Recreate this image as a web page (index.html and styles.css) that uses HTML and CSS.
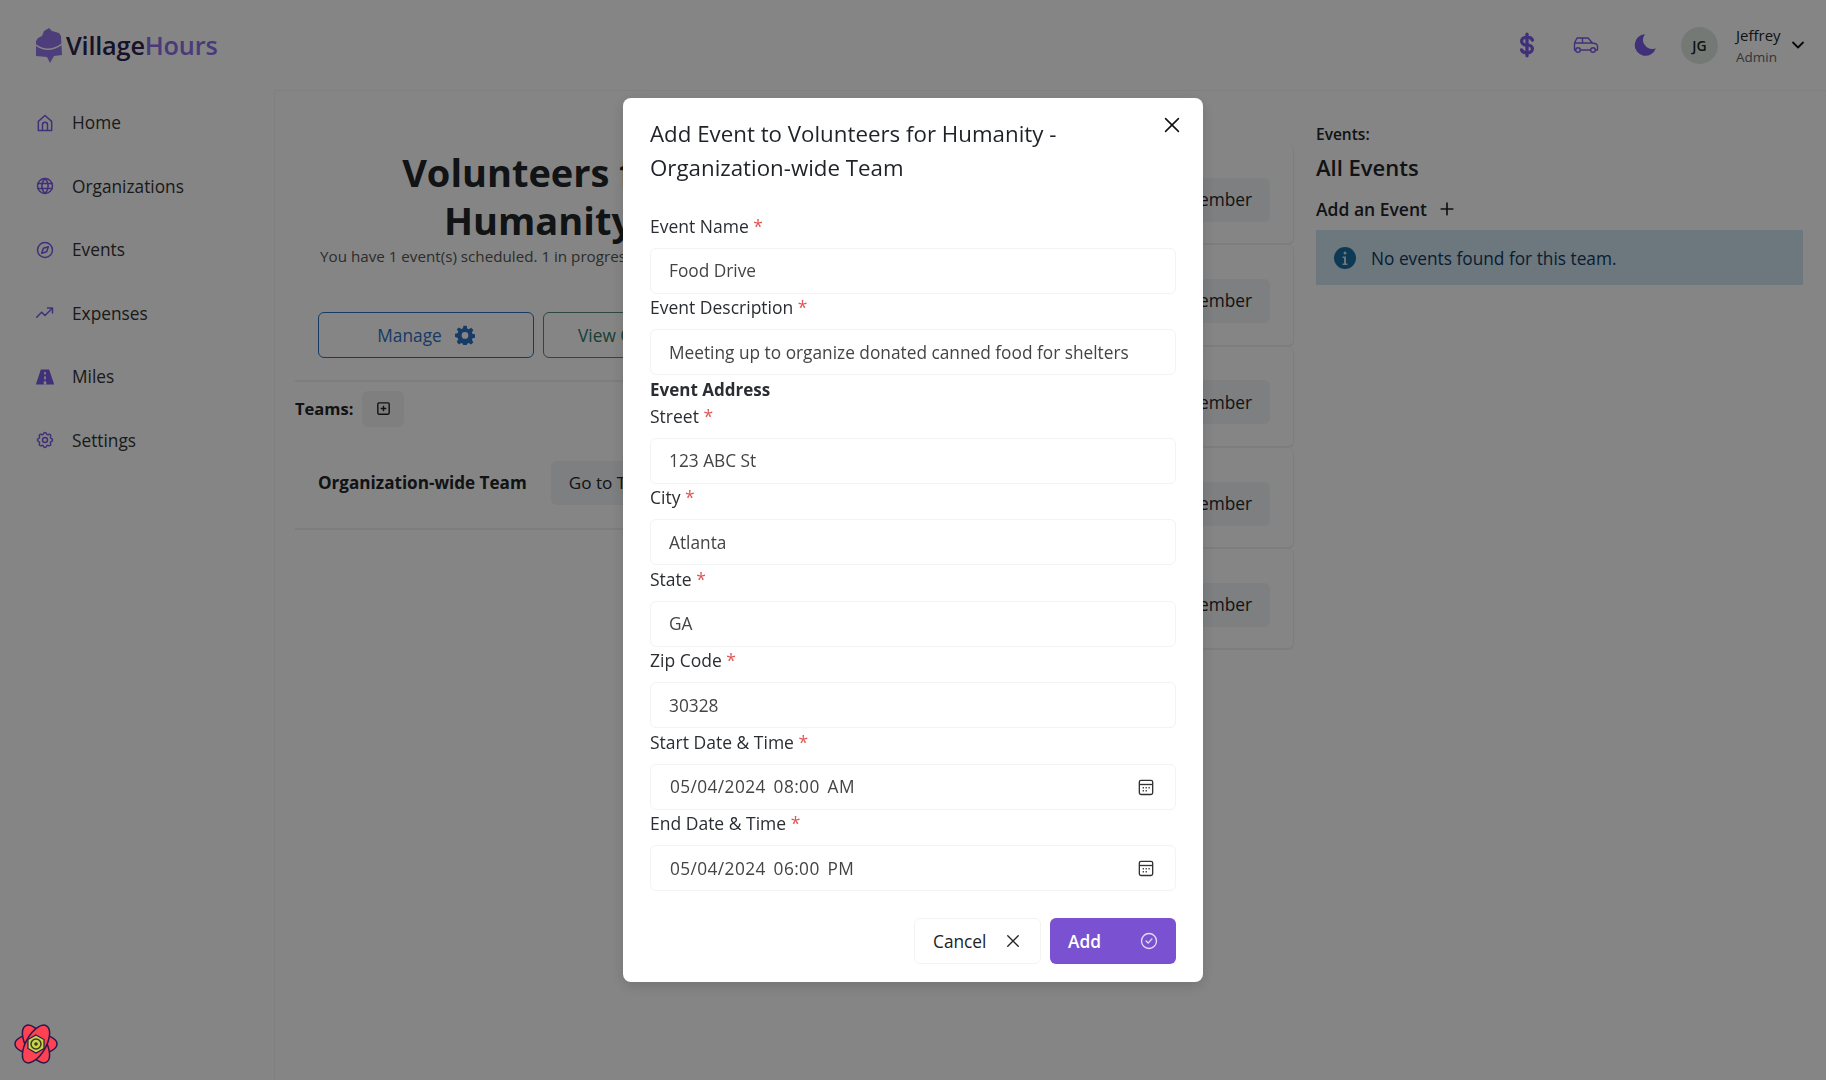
FILE: index.html
```html
<!DOCTYPE html>
<html lang="en">
<head>
    <meta charset="UTF-8">
    <meta name="viewport" content="width=device-width, initial-scale=1.0">
    <title>VillageHours</title>
    <link rel="stylesheet" href="styles.css">
</head>
<body>
    <header class="topbar">
        <div class="logo">
            <svg class="logo-mark" viewBox="0 0 26 35"><path d="M0 13 L2 10 L6 8 L8 3 L13 0 L16 3 L23 5 L25 8 L26 27 L18 28 L14 35 L11 29 L0 28Z" fill="#9478ec"/><path d="M0 17 Q12 26 26 16" fill="none" stroke="#fff" stroke-width="1.500"/></svg>
            <span class="logo-dark">Village</span><span class="logo-purple">Hours</span>
        </div>
        <div class="top-actions">
            <svg class="top-icon" viewBox="0 0 24 24" fill="none" stroke="#7c5ce8" stroke-width="3" stroke-linecap="round" stroke-linejoin="round"><path d="M17 7.500a4 3.500 0 0 0-4-2.500h-2a4 3.500 0 0 0 0 7h2a4 3.500 0 0 1 0 7h-2a4 3.500 0 0 1-4-2.500"/><path d="M12 2v20"/></svg>
            <svg class="top-icon car" viewBox="0 0 26 18" fill="none" stroke="#7c5ce8" stroke-width="1.400" stroke-linejoin="round"><path d="M3 14H1.500V7L4 2h11l4.500 5 4 1 1 2v4H22M7 14h11M1.500 7h18M9.500 2v5"/><circle cx="5" cy="14" r="2.300"/><circle cx="20" cy="14" r="2.300"/></svg>
            <svg class="top-icon moon" viewBox="0 0 24 24" fill="#7c5ce8"><path d="M12 2a10 10 0 1 0 10 13 8.500 8.500 0 0 1-10-13z"/></svg>
            <div class="avatar">JG</div>
            <div class="user">
                <span class="user-name">Jeffrey</span>
                <span class="user-role">Admin</span>
            </div>
            <svg class="chevron" viewBox="0 0 14 8" fill="none" stroke="#111" stroke-width="1.800" stroke-linecap="round" stroke-linejoin="round"><path d="M2 1.500l5 5 5-5"/></svg>
        </div>
    </header>

    <div class="layout">
        <nav class="sidebar">
            <a class="nav-item"><svg viewBox="0 0 24 24" class="nav-icon"><path d="M4 21V10l8-7 8 7v11z M9 21v-7a3 3 0 0 1 6 0v7"/></svg>Home</a>
            <a class="nav-item"><svg viewBox="0 0 24 24" class="nav-icon"><circle cx="12" cy="12" r="9"/><path d="M3.500 9h17M3.500 15h17M12 3c-5 5-5 13 0 18M12 3c5 5 5 13 0 18"/></svg>Organizations</a>
            <a class="nav-item"><svg viewBox="0 0 24 24" class="nav-icon"><circle cx="12" cy="12" r="9"/><path d="M8 16l2-6 6-2-2 6z"/></svg>Events</a>
            <a class="nav-item"><svg viewBox="0 0 24 24" class="nav-icon"><path d="M2 17l6-6 4 4 9-9M15 6h6v6"/></svg>Expenses</a>
            <a class="nav-item"><svg viewBox="0 0 24 20" class="nav-icon nav-fill"><path d="M7 1h10l6 18H1z"/><path d="M11 4h2v3h-2zM11 9h2v4h-2zM10.500 15h3v4h-3z" fill="#fff"/></svg>Miles</a>
            <a class="nav-item"><svg viewBox="0 0 24 24" class="nav-icon"><path d="M10.300 4.300c.4-1.800 3-1.800 3.400 0a1.700 1.700 0 0 0 2.600 1.100c1.500-.9 3.300.8 2.400 2.400a1.700 1.700 0 0 0 1 2.500c1.800.4 1.800 3 0 3.400a1.700 1.700 0 0 0-1 2.600c.9 1.500-.9 3.300-2.400 2.400a1.700 1.700 0 0 0-2.600 1c-.4 1.800-3 1.800-3.400 0a1.700 1.700 0 0 0-2.600-1c-1.500.9-3.300-.9-2.400-2.400a1.700 1.700 0 0 0-1-2.600c-1.800-.4-1.800-3 0-3.400a1.700 1.700 0 0 0 1-2.500c-.9-1.600.9-3.300 2.400-2.400a1.700 1.700 0 0 0 2.600-1.100z"/><circle cx="12" cy="12" r="3"/></svg>Settings</a>
        </nav>

        <main class="main">
            <section class="col-org">
                <div class="org-card">
                    <h1 class="org-title">Volunteers for<br>Humanity</h1>
                    <p class="org-sub">You have 1 event(s) scheduled. 1 in progress.</p>
                    <div class="org-btns">
                        <button class="btn-outline btn-blue">Manage
                            <svg viewBox="0 0 24 24" class="gear"><path fill-rule="evenodd" d="M10 1h4l.6 3.200 2 .8L19.300 3.200l2.800 2.800-1.800 2.700.8 2 3.200.6v4l-3.200.6-.8 2 1.800 2.700-2.800 2.800-2.700-1.800-2 .8-.6 2.800h-4l-.6-2.800-2-.8-2.700 1.800L2.100 20l1.800-2.700-.8-2L0 14.500v-4l3.100-.6.8-2L2.100 5.200 4.900 3l2.700 1.800 2-.8zM12 8.500a4 4 0 1 0 0 8 4 4 0 0 0 0-8z" fill="#2f6fc4"/></svg>
                        </button>
                        <button class="btn-outline btn-green">View Organization</button>
                    </div>
                </div>
                <div class="teams-head">
                    <strong class="teams-label">Teams:</strong>
                    <button class="btn-square"><svg viewBox="0 0 24 24" fill="none" stroke="#222" stroke-width="2"><rect x="4" y="4" width="16" height="16" rx="1.500"/><path d="M12 8v8M8 12h8"/></svg></button>
                </div>
                <div class="team-row">
                    <strong>Organization-wide Team</strong>
                    <button class="btn-gray">Go to Team</button>
                </div>
            </section>

            <section class="col-members">
                <div class="member-card"><button class="btn-gray">Remove Member</button></div>
                <div class="member-card"><button class="btn-gray">Remove Member</button></div>
                <div class="member-card"><button class="btn-gray">Remove Member</button></div>
                <div class="member-card"><button class="btn-gray">Remove Member</button></div>
                <div class="member-card"><button class="btn-gray">Remove Member</button></div>
            </section>

            <section class="col-events">
                <div class="events-label">Events:</div>
                <div class="events-title">All Events</div>
                <div class="events-add">Add an Event
                    <svg viewBox="0 0 24 24" fill="none" stroke="#222" stroke-width="2" stroke-linecap="round"><path d="M12 5v14M5 12h14"/></svg>
                </div>
                <div class="alert">
                    <svg viewBox="0 0 24 24"><circle cx="12" cy="12" r="11" fill="#1c6ea4"/><circle cx="12" cy="7" r="1.500" fill="#cfe2ee"/><path d="M9.500 10.500h3.500v7h1.500v1.500h-5v-1.500H11V12H9.500z" fill="#cfe2ee"/></svg>
                    No events found for this team.
                </div>
            </section>
        </main>
    </div>

    <div class="overlay">
        <div class="modal">
            <div class="modal-head">
                <h2 class="modal-title">Add Event to Volunteers for Humanity - Organization-wide Team</h2>
                <svg class="modal-close" viewBox="0 0 24 24" fill="none" stroke="#111" stroke-width="1.700" stroke-linecap="round"><path d="M5 5l14 14M19 5L5 19"/></svg>
            </div>
            <form class="modal-form">
                <div class="field">
                    <label>Event Name <span class="req">*</span></label>
                    <input type="text" value="Food Drive">
                </div>
                <div class="field">
                    <label>Event Description <span class="req">*</span></label>
                    <input type="text" value="Meeting up to organize donated canned food for shelters">
                </div>
                <div class="section-label">Event Address</div>
                <div class="field">
                    <label>Street <span class="req">*</span></label>
                    <input type="text" value="123 ABC St">
                </div>
                <div class="field">
                    <label>City <span class="req">*</span></label>
                    <input type="text" value="Atlanta">
                </div>
                <div class="field">
                    <label>State <span class="req">*</span></label>
                    <input type="text" value="GA">
                </div>
                <div class="field">
                    <label>Zip Code <span class="req">*</span></label>
                    <input type="text" value="30328">
                </div>
                <div class="field">
                    <label>Start Date &amp; Time <span class="req">*</span></label>
                    <div class="date-input">
                        <span>05/04/2024 08:00 AM</span>
                        <svg viewBox="0 0 24 24" fill="none" stroke="#333" stroke-width="1.600"><rect x="4" y="4" width="16" height="17" rx="2"/><path d="M4 9h16"/><path d="M8 13h1.500M11.500 13H13M15 13h1.500M8 16.500h1.500M11.500 16.500H13" stroke-width="1.800"/></svg>
                    </div>
                </div>
                <div class="field">
                    <label>End Date &amp; Time <span class="req">*</span></label>
                    <div class="date-input">
                        <span>05/04/2024 06:00 PM</span>
                        <svg viewBox="0 0 24 24" fill="none" stroke="#333" stroke-width="1.600"><rect x="4" y="4" width="16" height="17" rx="2"/><path d="M4 9h16"/><path d="M8 13h1.500M11.500 13H13M15 13h1.500M8 16.500h1.500M11.500 16.500H13" stroke-width="1.800"/></svg>
                    </div>
                </div>
                <div class="modal-actions">
                    <button type="button" class="btn-cancel">Cancel
                        <svg viewBox="0 0 24 24" fill="none" stroke="#222" stroke-width="1.800" stroke-linecap="round"><path d="M5 5l14 14M19 5L5 19"/></svg>
                    </button>
                    <button type="button" class="btn-add">Add
                        <svg viewBox="0 0 24 24" fill="none" stroke="#e4dcf6" stroke-width="1.600" stroke-linecap="round" stroke-linejoin="round"><circle cx="12" cy="12" r="9"/><path d="M8.500 12l2.500 2.500 4.500-5"/></svg>
                    </button>
                </div>
            </form>
        </div>
    </div>

    <svg class="query-flower" viewBox="0 0 44 44">
        <g fill="#ff4154" stroke="#2a1a4a" stroke-width="1.500">
            <ellipse cx="22" cy="22" rx="21" ry="10"/>
            <ellipse cx="22" cy="22" rx="21" ry="10" transform="rotate(60 22 22)"/>
            <ellipse cx="22" cy="22" rx="21" ry="10" transform="rotate(120 22 22)"/>
        </g>
        <path d="M22 13l8 4.500v9L22 31l-8-4.500v-9z" fill="#c9d64a" stroke="#2a1a4a" stroke-width="1.200"/>
        <circle cx="22" cy="22" r="5" fill="none" stroke="#3a3a20" stroke-width="1.500"/>
        <circle cx="22" cy="22" r="1.800" fill="#3a3a20"/>
    </svg>
</body>
</html>
```

FILE: styles.css
```css
/* General page */
* {
    box-sizing: border-box;
}

body {
    margin: 0;
    height: 1080px;
    overflow: hidden;
    background: #fff;
    color: #212529;
    font-family: 'Open Sans', 'Noto Sans', sans-serif;
    font-size: 17.300px;
}

button {
    font-family: inherit;
    font-size: inherit;
}

/* Header */
.topbar {
    height: 90px;
    display: flex;
    align-items: center;
    justify-content: space-between;
    padding: 0 21px 0 36px;
}

.logo {
    display: flex;
    align-items: center;
    font-size: 25.300px;
    font-weight: 600;
    letter-spacing: -0.2px;
}

.logo-mark {
    width: 26px;
    height: 35px;
    margin-right: 4px;
}

.logo-dark {
    color: #2b2350;
}

.logo-purple {
    color: #8c6fe8;
}

.top-actions {
    display: flex;
    align-items: center;
}

.top-icon {
    width: 26px;
    height: 26px;
    margin-right: 33px;
}

.top-icon.car {
    height: 20px;
}

.top-icon.moon {
    margin-right: 23px;
}

.avatar {
    width: 37px;
    height: 37px;
    border-radius: 50%;
    background: #dfe9e3;
    display: flex;
    align-items: center;
    justify-content: center;
    font-size: 14px;
    font-weight: 600;
}

.user {
    display: flex;
    flex-direction: column;
    margin-left: 18px;
    width: 54px;
    padding-top: 2px;
}

.user-name {
    font-size: 15px;
    line-height: 22px;
}

.user-role {
    font-size: 13.500px;
    line-height: 22px;
    color: #666;
}

.chevron {
    width: 14px;
    height: 8px;
    margin-left: 1px;
}

/* Sidebar */
.layout {
    display: flex;
    height: 990px;
}

.sidebar {
    width: 275px;
    flex-shrink: 0;
    padding: 1px 0 0 35px;
    border-right: 1px solid #f4f4f4;
}

.nav-item {
    height: 63.500px;
    display: flex;
    align-items: center;
    color: #333;
}

.nav-icon {
    width: 20px;
    height: 20px;
    margin-right: 17px;
    fill: none;
    stroke: #7c5ce8;
    stroke-width: 1.800;
    stroke-linecap: round;
    stroke-linejoin: round;
}

.nav-fill {
    fill: #7c5ce8;
    stroke: none;
}

/* Main columns */
.main {
    flex: 1;
    display: flex;
    padding: 0 23px 0 20px;
    border-top: 1px solid #f4f4f4;
}

.col-org {
    width: 487px;
    margin-right: 15px;
}

.org-card {
    height: 291px;
    padding: 57px 23px 0;
    text-align: center;
    border-bottom: 2px solid #f0f0f0;
}

.org-title {
    margin: 0;
    font-size: 38px;
    line-height: 48px;
    font-weight: 700;
}

.org-sub {
    margin: 0;
    padding: 1px 0 0 2px;
    font-size: 15.200px;
    line-height: 22px;
    color: #555;
    text-align: left;
    white-space: nowrap;
}

.org-btns {
    display: flex;
    gap: 9px;
    margin-top: 45px;
}

.btn-outline {
    width: 216px;
    height: 46px;
    background: #fff;
    border-radius: 6px;
    font-weight: 500;
    display: flex;
    align-items: center;
    justify-content: center;
    gap: 13px;
    white-space: nowrap;
}

.btn-blue {
    border: 1px solid #2f6fc4;
    color: #2f6fc4;
}

.btn-green {
    border: 1px solid #5b8a7a;
    color: #2f7a66;
}

.gear {
    width: 20px;
    height: 20px;
}

.teams-head {
    display: flex;
    align-items: center;
    gap: 9px;
    height: 33px;
    margin-top: 10px;
}

.teams-label {
    font-size: 16.500px;
}

.btn-square {
    width: 42px;
    height: 36px;
    background: #f3f4f5;
    border: 0;
    border-radius: 6px;
    padding: 0;
    display: flex;
    align-items: center;
    justify-content: center;
}

.btn-square svg {
    width: 17px;
    height: 17px;
}

.team-row {
    height: 105px;
    padding: 12px 0 0 23px;
    display: flex;
    align-items: center;
    gap: 24px;
    font-size: 17.100px;
    border-bottom: 2px solid #f0f0f0;
}

.btn-gray {
    height: 44px;
    padding: 0 18px;
    border: 0;
    border-radius: 6px;
    background: #f1f3f5;
    color: #212529;
    white-space: nowrap;
    font-weight: 500;
}

.col-members {
    width: 497px;
    margin-right: 22px;
    padding-top: 53px;
}

.member-card {
    height: 101.300px;
    display: flex;
    align-items: center;
    justify-content: flex-end;
    padding: 32px 23px 20px 0;
    border-right: 1px solid #f0f0f0;
    border-bottom: 2px solid #f0f0f0;
    border-radius: 6px;
}

.col-events {
    flex: 1;
    padding-top: 32px;
}

.events-label {
    font-weight: 600;
    font-size: 15.500px;
    line-height: 22px;
}

.events-title {
    margin-top: 7px;
    font-size: 22px;
    line-height: 30px;
    font-weight: 600;
}

.events-add {
    display: flex;
    align-items: center;
    gap: 10px;
    margin-top: 15px;
    font-size: 17.500px;
    font-weight: 600;
    line-height: 24px;
}

.events-add svg {
    width: 20px;
    height: 20px;
}

.alert {
    height: 55px;
    margin-top: 9px;
    padding: 1px 0 0 17px;
    display: flex;
    align-items: center;
    gap: 14px;
    background: #cfe4f2;
    color: #123a5c;
}

.alert svg {
    width: 24px;
    height: 24px;
}

/* Modal */
.overlay {
    position: fixed;
    inset: 0;
    background: rgba(0, 0, 0, 0.48);
    display: flex;
    align-items: center;
    justify-content: center;
}

.modal {
    width: 580px;
    height: 884px;
    background: #fff;
    border-radius: 8px;
    padding: 19px 27px 18px;
    box-shadow: 0 4px 14px rgba(0, 0, 0, 0.15);
}

.modal-head {
    display: flex;
    align-items: flex-start;
    justify-content: space-between;
    height: 97.500px;
}

.modal-title {
    margin: 0;
    width: 440px;
    font-size: 22.300px;
    line-height: 34px;
    font-weight: 500;
    color: #1f2328;
}

.modal-close {
    width: 22px;
    height: 22px;
    margin-top: -3px;
    margin-right: -7px;
}

.field {
    margin-bottom: 2.500px;
}

.field label {
    display: block;
    height: 24px;
    line-height: 22px;
    margin-bottom: 9px;
    font-size: 17.500px;
    font-weight: 500;
    color: #2a2d31;
}

.req {
    color: #e25555;
}

.field input,
.date-input {
    width: 100%;
    height: 46px;
    border: 1px solid #f1f3f5;
    border-radius: 6px;
    background: #fff;
    padding: 0 18px;
    font-family: inherit;
    font-size: 17.300px;
    color: #444;
}

.date-input {
    display: flex;
    align-items: center;
    justify-content: space-between;
    padding: 0 19px;
    letter-spacing: 0.4px;
    word-spacing: 3px;
}

.date-input svg {
    width: 20px;
    height: 20px;
}

.section-label {
    height: 27px;
    line-height: 24px;
    font-size: 17px;
    font-weight: 700;
    color: #2a2d31;
}

.modal-actions {
    display: flex;
    justify-content: flex-end;
    gap: 9px;
    margin-top: 27px;
}

.btn-cancel,
.btn-add {
    height: 46px;
    display: flex;
    align-items: center;
    border-radius: 6px;
    font-weight: 500;
}

.btn-cancel {
    width: 127px;
    padding: 0 18px;
    justify-content: space-between;
    background: #fff;
    border: 1px solid #f3f3f3;
    color: #222;
}

.btn-cancel svg {
    width: 18px;
    height: 18px;
}

.btn-add {
    width: 126px;
    padding: 0 17px 0 18px;
    justify-content: space-between;
    background: #7a52d1;
    border: 0;
    color: #fff;
    font-weight: 600;
}

.btn-add svg {
    width: 20px;
    height: 20px;
}

/* Devtools flower stays on top of the overlay */
.query-flower {
    position: fixed;
    left: 14px;
    bottom: 14px;
    width: 44px;
    height: 44px;
}
```
